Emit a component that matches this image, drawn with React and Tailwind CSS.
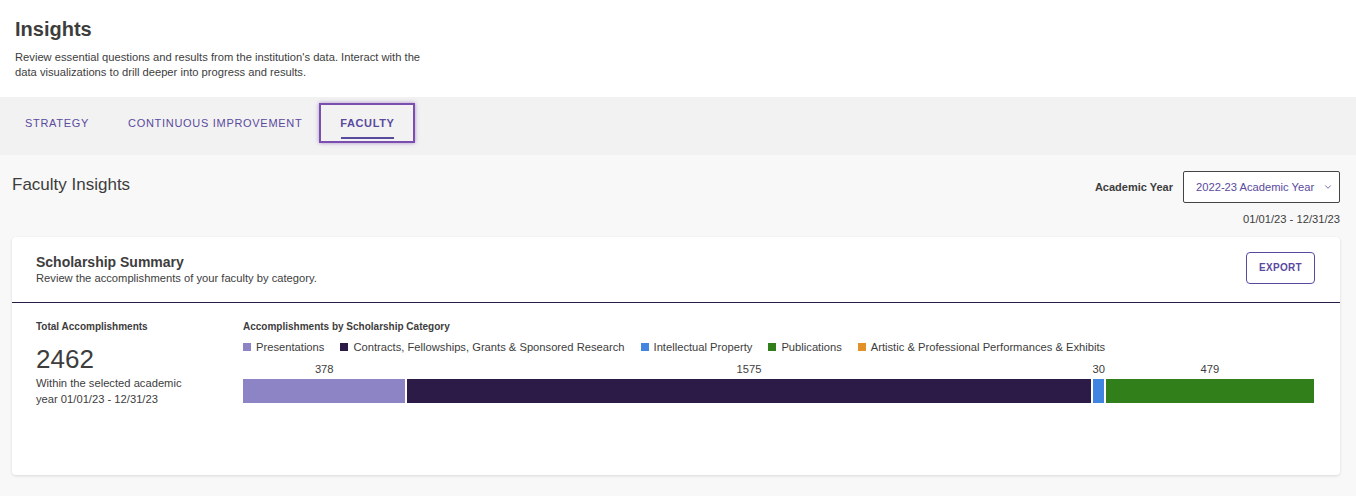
import { ChevronDown } from "lucide-react";

const categories = [
  { name: "Presentations", color: "#8c84c5", value: 378 },
  { name: "Contracts, Fellowships, Grants & Sponsored Research", color: "#2c1a47", value: 1575 },
  { name: "Intellectual Property", color: "#4285e1", value: 30 },
  { name: "Publications", color: "#307f1a", value: 479 },
  { name: "Artistic & Professional Performances & Exhibits", color: "#e29128", value: 0 },
];

const total = categories.reduce((sum, c) => sum + c.value, 0);

const App = () => {
  return (
    <div className="min-h-[496px] bg-[#f8f8f8] text-[#3f3f3f]" style={{ fontFamily: "'Liberation Sans', Arial, sans-serif" }}>
      {/* Page header */}
      <div className="bg-white px-[15px] pt-[17px] h-[97px]">
        <h1 className="text-[20px] font-bold leading-[24px] text-[#3d3d3d]">Insights</h1>
        <p className="mt-[9px] text-[11.2px] leading-[15px] text-[#3d3d3d] w-[425px]">
          Review essential questions and results from the institution's data. Interact with the data visualizations to drill deeper into progress and results.
        </p>
      </div>

      {/* Tabs */}
      <div className="bg-[#f2f2f2] h-[58px] flex items-start pt-[6px] pl-[5px]">
        <button className="h-[40px] px-[20px] text-[11px] tracking-[0.7px] text-[#5a4a9e]">STRATEGY</button>
        <button className="h-[40px] pl-[19px] pr-[17px] text-[11px] tracking-[0.7px] text-[#5a4a9e]">CONTINUOUS IMPROVEMENT</button>
        <button className="relative h-[40px] w-[96px] border-2 border-[#7a4fb0] shadow-[0_0_4px_rgba(122,79,176,0.6)] text-[11px] font-bold tracking-[0.6px] text-[#5a4a9e]">
          FACULTY
          <span className="absolute left-[20px] right-[19px] bottom-[2px] h-[2px] bg-[#5a4a9e]"></span>
        </button>
      </div>

      {/* Main */}
      <div className="pl-[12px] pr-[16px] pt-[16px] pb-[20px]">
        <div className="flex justify-between">
          <h2 className="text-[17px] leading-[24px] text-[#3d3d3d] pt-[2px]">Faculty Insights</h2>
          <div className="flex flex-col items-end">
            <div className="flex items-center gap-[10px]">
              <span className="text-[11px] font-bold text-[#3d3d3d]">Academic Year</span>
              <div className="w-[157px] h-[32px] border border-[#444] rounded-[2px] bg-white flex items-center pl-[12px] gap-[9px]">
                <span className="text-[11.2px] text-[#5a4a9e]">2022-23 Academic Year</span>
                <ChevronDown size={10} className="text-[#5a4a9e]" strokeWidth={2} />
              </div>
            </div>
            <span className="mt-[8px] text-[11.2px] text-[#3d3d3d]">01/01/23 - 12/31/23</span>
          </div>
        </div>

        {/* Card */}
        <div className="mt-[9px] bg-white rounded-[4px] shadow-[0_1px_3px_rgba(0,0,0,0.12)] h-[238px]">
          <div className="flex justify-between items-start pl-[24px] pr-[25px] pt-[15px] h-[66px] border-b border-[#2c1a47]">
            <div className="pt-[1px]">
              <h3 className="text-[14px] font-bold leading-[18px] text-[#3d3d3d]">Scholarship Summary</h3>
              <p className="text-[11.2px] leading-[14px] text-[#3d3d3d]">Review the accomplishments of your faculty by category.</p>
            </div>
            <button className="w-[69px] h-[32px] border border-[#5a4a9e] rounded-[4px] text-[10px] font-bold tracking-[0.3px] text-[#5a4a9e]">EXPORT</button>
          </div>

          <div className="flex px-[24px] pt-[17px]">
            <div className="w-[207px]">
              <div className="text-[10px] font-bold text-[#3d3d3d] leading-[14px]">Total Accomplishments</div>
              <div className="mt-[10px] text-[26px] leading-[30px] text-[#3d3d3d]">{total}</div>
              <div className="mt-[1px] text-[11.2px] leading-[16px] text-[#3d3d3d] w-[160px]">Within the selected academic year 01/01/23 - 12/31/23</div>
            </div>

            <div className="flex-1">
              <div className="text-[10px] font-bold text-[#3d3d3d] leading-[14px]">Accomplishments by Scholarship Category</div>
              <div className="mt-[5px] flex items-center gap-[16px]">
                {categories.map((c) => (
                  <div key={c.name} className="flex items-center gap-[5px]">
                    <span className="w-[8px] h-[8px]" style={{ backgroundColor: c.color }}></span>
                    <span className="text-[11.2px] text-[#3d3d3d]">{c.name}</span>
                  </div>
                ))}
              </div>
              <div className="mt-[6px] flex w-[1071px]">
                {categories.filter((c) => c.value > 0).map((c) => (
                  <div key={c.name} className="flex flex-col border-r-2 border-white last:border-r-0" style={{ width: `${(c.value / total) * 100}%` }}>
                    <span className="text-[11.2px] leading-[14px] text-center text-[#3d3d3d]">{c.value}</span>
                    <span className="mt-[3px] h-[24px]" style={{ backgroundColor: c.color }}></span>
                  </div>
                ))}
              </div>
            </div>
          </div>
        </div>
      </div>
    </div>
  );
};

export default App;
